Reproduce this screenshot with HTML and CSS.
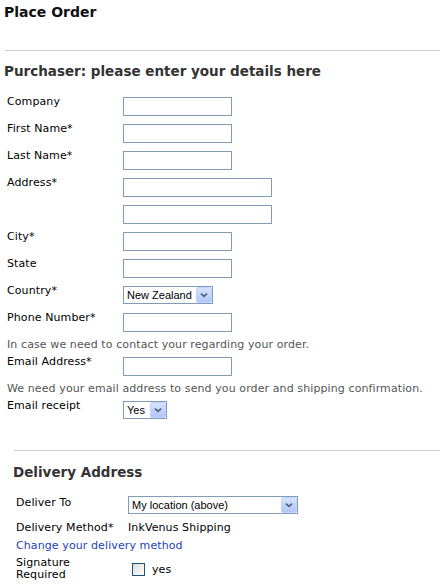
FILE: index.html
```html
<!DOCTYPE html>
<html>
<head>
<meta charset="utf-8">
<title>Place Order</title>
<link rel="stylesheet" href="styles.css">
</head>
<body>
<div class="page">
  <h1 class="title">Place Order</h1>
  <hr class="rule">
  <h2 class="heading">Purchaser: please enter your details here</h2>
  <div class="form">
    <div class="row"><span class="label">Company</span><input class="field" type="text"></div>
    <div class="row"><span class="label">First Name*</span><input class="field" type="text"></div>
    <div class="row"><span class="label">Last Name*</span><input class="field" type="text"></div>
    <div class="row"><span class="label">Address*</span><input class="field wide" type="text"></div>
    <div class="row"><span class="label"></span><input class="field wide" type="text"></div>
    <div class="row"><span class="label">City*</span><input class="field" type="text"></div>
    <div class="row"><span class="label">State</span><input class="field" type="text"></div>
    <div class="row"><span class="label">Country*</span>
      <div class="select w-country"><span class="select-text">New Zealand</span><span class="arrow"><svg width="16" height="16" viewBox="0 0 16 16"><path d="M4.5 6.5 L8 9.5 L11.5 6.5" fill="none" stroke="#4d6185" stroke-width="2"/></svg></span></div>
    </div>
    <div class="row"><span class="label">Phone Number*</span><input class="field" type="text"></div>
    <p class="note">In case we need to contact your regarding your order.</p>
    <div class="row"><span class="label">Email Address*</span><input class="field" type="text"></div>
    <p class="note">We need your email address to send you order and shipping confirmation.</p>
    <div class="row"><span class="label">Email receipt</span>
      <div class="select w-yes"><span class="select-text">Yes</span><span class="arrow"><svg width="16" height="16" viewBox="0 0 16 16"><path d="M4.5 6.5 L8 9.5 L11.5 6.5" fill="none" stroke="#4d6185" stroke-width="2"/></svg></span></div>
    </div>
  </div>

  <div class="delivery">
    <hr class="rule">
    <h2 class="heading">Delivery Address</h2>
    <div class="drow first"><span class="dlabel">Deliver To</span>
      <div class="select w-deliver"><span class="select-text">My location (above)</span><span class="arrow"><svg width="16" height="16" viewBox="0 0 16 16"><path d="M4.5 6.5 L8 9.5 L11.5 6.5" fill="none" stroke="#4d6185" stroke-width="2"/></svg></span></div>
    </div>
    <div class="drow method"><span class="dlabel">Delivery Method*</span><span class="value">InkVenus Shipping</span></div>
    <a class="change-link" href="#">Change your delivery method</a>
    <div class="drow sig"><span class="dlabel two-line">Signature<br>Required</span><span class="checkbox"></span><span class="yes">yes</span></div>
  </div>
</div>
</body>
</html>
```
FILE: styles.css
```css
html, body {
  margin: 0;
  padding: 0;
  background: #fff;
}
body {
  font-family: "DejaVu Sans", Verdana, sans-serif;
  font-size: 11px;
  letter-spacing: 0.1px;
  color: #000;
}
.page {
  padding: 4px 0 0 4px;
}
.title {
  margin: 0;
  font-size: 14px;
  line-height: 17px;
  font-weight: bold;
  letter-spacing: 0;
  color: #111;
}
.rule {
  margin: 29px 0 0 1px;
  height: 0;
  border: 0;
  border-top: 1px solid #cccccc;
}
.heading {
  margin: 12px 0 0;
  font-size: 13.5px;
  line-height: 16px;
  font-weight: bold;
  letter-spacing: 0;
  color: #333;
}
.form {
  margin-top: 18px;
  padding-left: 3px;
}
.row {
  display: flex;
  align-items: flex-start;
  height: 19px;
}
.row + .row {
  margin-top: 8px;
}
.label {
  width: 116px;
  flex: none;
  margin-top: -2px;
  line-height: 13px;
  color: #000;
}
.field {
  box-sizing: border-box;
  width: 109px;
  height: 19px;
  margin: 0;
  padding: 0 2px;
  border: 1px solid #7f9db9;
  background: #fff;
  font: 11px "DejaVu Sans", sans-serif;
}
.field.wide {
  width: 149px;
}
.note {
  margin: 6px 0 0;
  line-height: 13px;
  color: #555;
}
.note + .row {
  margin-top: 6px;
}
.select {
  box-sizing: border-box;
  display: flex;
  align-items: center;
  height: 18px;
  border: 1px solid #7f9db9;
  background: #fff;
  font-family: "Liberation Sans", Arial, sans-serif;
  font-size: 11px;
  letter-spacing: 0;
  color: #000;
}
.select-text {
  flex: 1;
  padding-left: 3px;
  line-height: 16px;
  white-space: nowrap;
  overflow: hidden;
}
.arrow {
  box-sizing: border-box;
  flex: none;
  width: 16px;
  height: 16px;
  border: 1px solid #c3d3fd;
  border-radius: 2px;
  background: linear-gradient(#d6e2fe, #b2c7f7);
  display: flex;
  align-items: center;
  justify-content: center;
}
.arrow svg {
  display: block;
  width: 14px;
  height: 14px;
}
.w-country { width: 90px; }
.w-yes { width: 44px; }
.w-deliver { width: 170px; }

.delivery {
  margin-top: 30px;
  padding-left: 9px;
}
.delivery .heading {
  margin-top: 13px;
}
.drow {
  display: flex;
  align-items: flex-start;
  padding-left: 3px;
}
.drow.first {
  margin-top: 16px;
}
.drow.method {
  margin-top: 7px;
}
.dlabel {
  width: 112px;
  flex: none;
  line-height: 13px;
  color: #000;
}
.value {
  line-height: 13px;
  color: #000;
}
.change-link {
  display: block;
  margin-top: 5px;
  padding-left: 3px;
  line-height: 13px;
  color: #2143b8;
  text-decoration: none;
}
.drow.sig {
  margin-top: 5px;
  align-items: center;
}
.two-line {
  line-height: 12px;
}
.checkbox {
  box-sizing: border-box;
  width: 13px;
  height: 13px;
  margin-left: 4px;
  border: 1px solid #1c5180;
  background: linear-gradient(135deg, #dcdcd7, #ffffff);
}
.yes {
  margin-left: 7px;
  line-height: 13px;
  margin-top: 1px;
}
```
